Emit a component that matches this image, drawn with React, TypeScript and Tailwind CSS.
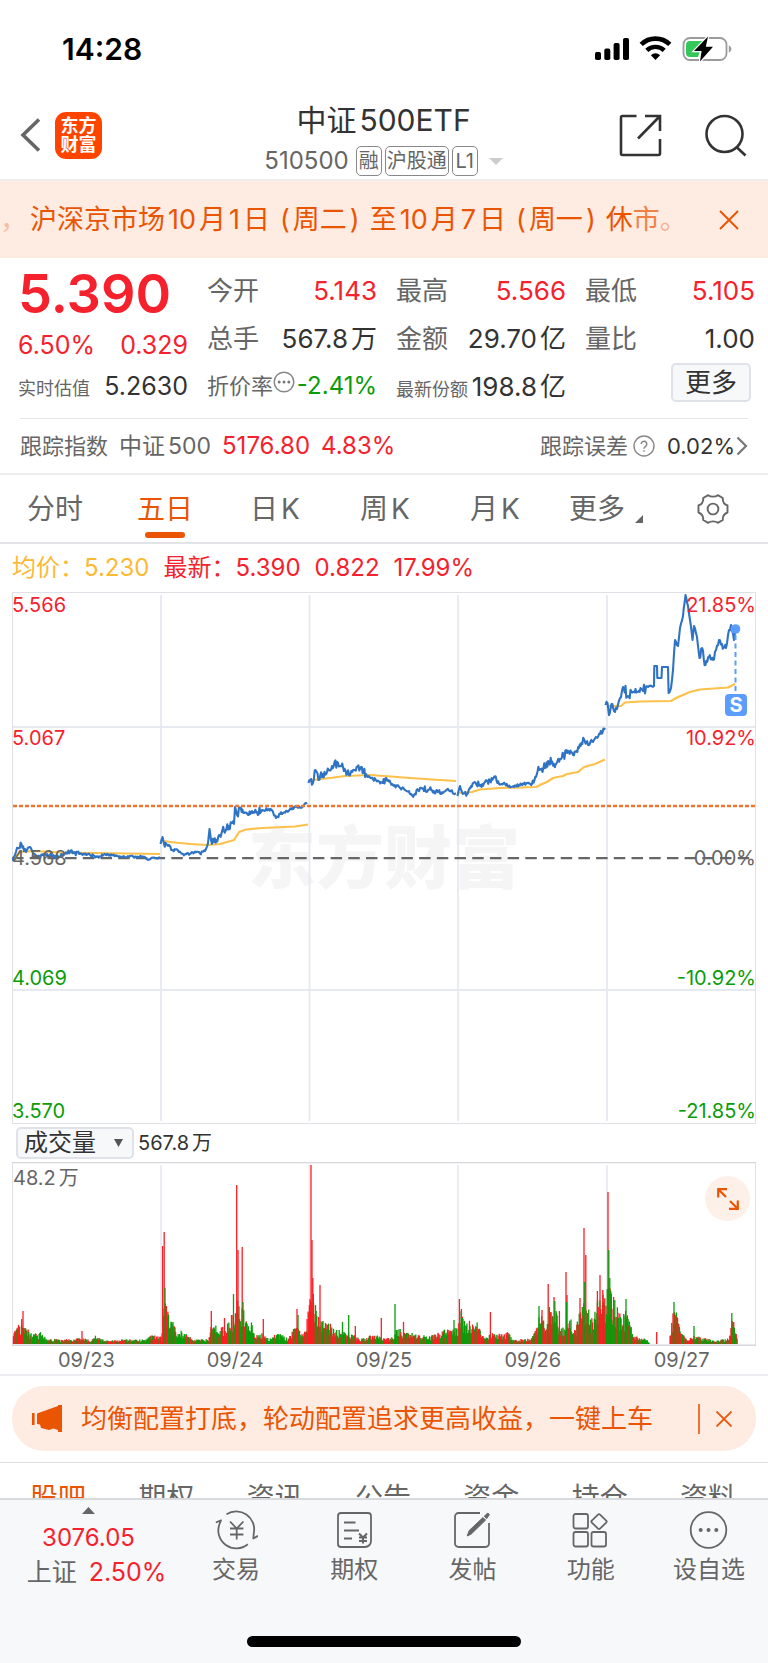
import React from "react";

type Key = [number, number, number?];

const RED = "#fb1e24";
const GREEN = "#0a9c0a";

function makeRandom(seed: number) {
  let s = seed;
  return () => {
    s = (s * 1664525 + 1013904223) % 4294967296;
    return s / 4294967296;
  };
}

/* Price keys: x, y and the jitter of the minute ticks after that key */
const priceDays: Key[][] = [
  [
    [12.5, 861, 1], [15, 855, 2], [18, 848, 2], [21.5, 844, 2], [24, 851, 2], [27, 850, 2], [30, 847, 2], [33, 853, 1],
    [38, 857, 1], [47, 854, 1.2], [54, 857, 1.2], [62, 855, 1.5], [70, 852, 1.5], [80, 854, 1], [90, 855, 1], [97, 857, 0.8],
    [107, 854, 0.8], [116, 856, 0.6], [127, 857, 0.8], [143, 856.5, 0.8], [148, 860, 0.8], [153, 857.5, 0.8], [160, 858],
  ],
  [
    [160.5, 844, 1], [162.5, 837, 1], [164, 844, 2], [168, 846, 1.6], [172, 850, 0.8], [178, 850.5, 0.8], [183, 854, 1],
    [190, 854, 0.8], [195, 851.5, 0.8], [200, 853.5, 1], [205, 851, 1], [208, 843, 1], [209.5, 829, 1], [211, 840, 2.5],
    [214, 842, 3.5], [219, 835, 3.5], [224, 831, 3], [229, 826, 3], [234, 824, 1], [235, 807, 2], [237, 815, 3], [240, 808, 1.5],
    [244, 813, 1.5], [248, 815, 1.5], [252, 811, 1.5], [257, 812, 3], [262, 810, 1], [269, 809, 1], [273, 812, 1], [276, 818, 2],
    [280, 814, 1], [287, 811, 1], [296, 807, 1.3], [302, 807.5, 1], [307, 802.5],
  ],
  [
    [308.5, 783, 2], [311, 779, 3], [313, 783, 3], [315.5, 770, 3], [318.5, 780, 4], [322, 777, 2], [327, 772, 2.5], [332, 766, 3],
    [338, 763, 2], [343, 767, 2.5], [349, 775, 2], [354, 770, 2], [361, 767, 3], [366, 774, 1.5], [373, 779, 1.5], [381, 782, 2],
    [388, 780, 1], [394, 786, 1.2], [402, 788, 1.2], [409, 791, 2], [414, 795, 1.5], [420, 788, 2.5], [428, 790, 2.2],
    [436, 791, 2], [441, 794, 1.2], [447, 789.5, 1], [456, 793.5],
  ],
  [
    [457.5, 796, 1], [460, 786, 1], [462, 792, 1.5], [467, 794, 1.5], [471, 786, 1.5], [475, 782, 2], [479, 785, 3], [484, 783, 2],
    [490, 781, 1.5], [494, 777, 2], [499, 784, 1.2], [505, 784, 1], [511, 787, 1], [519, 785, 1], [527, 783, 1], [532, 784, 1.5],
    [536, 777, 4], [540, 769, 5], [545, 768, 4], [549, 762, 4], [554, 764, 3], [560, 759, 4], [567, 753, 3.5], [573, 755, 1.5],
    [579, 748, 2], [584, 739, 2], [588, 745, 2], [594, 740, 1], [600, 734, 1.5], [605, 728],
  ],
  [
    [605.5, 705, 3], [607.5, 703, 3], [609, 715, 2], [611.5, 704, 2], [614, 711, 2], [617, 709, 2], [620, 698, 3], [623, 687, 4],
    [628, 696, 3], [633, 692, 2.2], [638, 692, 2.5], [643, 691, 4], [646, 687, 0.6], [654, 686, 0], [654.3, 666, 0], [657, 666, 0],
    [657.3, 678, 0], [661.5, 678, 0], [662, 667, 0], [668, 667, 0], [668.6, 693, 1], [671, 688, 2], [673, 670, 1], [675, 640, 0.8],
    [678, 646, 1], [680, 628, 1], [683, 616, 1], [685.5, 595, 0.5], [688, 606, 1], [690.5, 623, 2], [692.5, 640, 1], [694, 626, 1.5],
    [696, 633, 2], [698, 646, 1], [699.5, 658, 2], [702, 648, 3], [705.5, 665, 2], [709, 657, 3], [713, 660, 2], [716, 650, 2],
    [719, 640, 2], [722, 644, 3], [726, 648, 3], [729, 630, 2], [731, 625, 1], [734, 640, 1], [735.5, 629],
  ],
];

const averageDays: string[] = [
  "13,861 20,852 34,851 60,852.5 95,853 160,854",
  "163,841 175,842.5 190,844 207,845 220,844 234,840 239,832 246,829.5 262,828 295,826.5 308,824.5",
  "312,780 330,778 345,776 370,775 391,776.5 410,778 440,780 456,781",
  "459,793 472,792 480,789.5 500,788 536,787 541,784.5 547,782 553,778 563,776 567,774 578,772 584,767 595,764 605,759.5",
  "609,706 621,706 625,702.5 640,701.5 671,701 677,697.5 690,692 700,689.5 728,687.5 735,684",
];

function tickPath(keys: Key[], seed: number) {
  const random = makeRandom(seed);
  const out: string[] = [];
  for (let i = 0; i < keys.length - 1; i++) {
    const [x0, y0, jitter = 0] = keys[i];
    const [x1, y1] = keys[i + 1];
    out.push(`${x0},${y0}`);
    const steps = Math.floor((x1 - x0) / 0.8);
    for (let k = 1; k < steps; k++) {
      const t = k / steps;
      const y = y0 + (y1 - y0) * t + (random() - 0.5) * 2.9 * jitter;
      out.push(`${(x0 + (x1 - x0) * t).toFixed(1)},${y.toFixed(1)}`);
    }
  }
  const last = keys[keys.length - 1];
  out.push(`${last[0]},${last[1]}`);
  return out.join(" ");
}

/* Volume envelope: x, typical height, share of rising minutes */
const volumeEnvelope: [number, number, number][] = [
  [13, 12, 0.3], [20, 18, 0.8], [24, 18, 0.4], [30, 9, 0.3], [40, 10, 0.3], [48, 4, 0.4], [85, 5, 0.4], [90, 3, 0.5],
  [95, 7, 0.3], [105, 3, 0.7], [125, 4, 0.4], [143, 4, 0.4], [150, 8, 0.7], [161, 6, 0.5], [163, 40, 0.8], [168, 28, 0.3],
  [172, 16, 0.2], [186, 9, 0.5], [192, 4, 0.2], [208, 4, 0.7], [211, 20, 0.3], [216, 15, 0.4], [224, 16, 0.6], [230, 20, 0.5],
  [236, 40, 0.6], [242, 34, 0.5], [246, 18, 0.1], [251, 19, 0.1], [254, 7, 0.4], [262, 10, 0.5], [266, 5, 0.2], [278, 9, 0.1],
  [288, 5, 0.6], [296, 18, 0.8], [301, 8, 0.5], [307, 24, 0.9], [311, 50, 0.9], [315, 36, 0.5], [320, 20, 0.5], [330, 17, 0.5],
  [340, 12, 0.5], [352, 8, 0.4], [362, 5, 0.4], [370, 8, 0.2], [382, 7, 0.6], [392, 6, 0.3], [396, 14, 0.3], [406, 11, 0.5],
  [416, 8, 0.4], [430, 7, 0.5], [444, 12, 0.4], [457, 14, 0.3], [460, 32, 0.7], [464, 20, 0.4], [476, 20, 0.7], [482, 7, 0.5],
  [492, 9, 0.6], [508, 10, 0.2], [513, 4, 0.5], [531, 5, 0.4], [536, 14, 0.5], [540, 30, 0.4], [545, 17, 0.5], [550, 28, 0.5],
  [556, 28, 0.4], [560, 12, 0.5], [568, 24, 0.4], [575, 14, 0.6], [582, 36, 0.7], [587, 32, 0.4], [592, 20, 0.3], [597, 38, 0.6],
  [603, 42, 0.5], [609, 52, 0.4], [615, 34, 0.4], [622, 24, 0.5], [627, 30, 0.2], [632, 9, 0.3], [640, 6, 0.3], [648, 3, 0.3],
  [649, 0, 0], [669, 0, 0], [670, 12, 0.5], [674, 36, 0.6], [680, 10, 0.5], [688, 5, 0.5], [695, 7, 0.3], [705, 5, 0.3],
  [716, 3, 0.4], [728, 5, 0.6], [732, 22, 0.5], [736, 12, 0.3], [737, 0, 0],
];

const volumeSpikes: [number, number, string][] = [
  [23, 33, RED], [21.7, 25, RED], [18.5, 19, RED], [82, 13, RED], [162.6, 98, RED], [164.2, 112, RED], [165, 56, GREEN],
  [166.4, 38, RED], [173, 22, GREEN], [211.3, 33, RED], [224.5, 26, RED], [231.5, 29, RED], [233.5, 50, GREEN],
  [236.7, 159, RED], [238, 94, RED], [242.2, 97, RED], [243, 42, GREEN], [263.3, 25, RED], [297, 35, RED], [298, 29, GREEN],
  [311, 179, RED], [312, 104, RED], [312.8, 66, RED], [313.6, 41, GREEN], [320, 59, RED], [348.7, 29, GREEN], [342.5, 22, GREEN],
  [355.3, 18, RED], [381.3, 26, RED], [395, 40, GREEN], [403.5, 22, RED], [454, 24, GREEN], [459.4, 45, RED], [461.4, 35, RED],
  [462.4, 26, GREEN], [490.4, 32, RED], [539, 38, GREEN], [542, 34, RED], [548.2, 60, RED], [549.4, 37, GREEN], [554, 47, RED],
  [554.8, 43, GREEN], [559.4, 33, RED], [566, 72, RED], [567, 49, RED], [566.6, 42, GREEN], [580, 46, RED], [584, 116, RED],
  [585.8, 89, RED], [584.8, 62, GREEN], [597.4, 53, RED], [600, 69, RED], [602.8, 54, RED], [608, 152, RED], [608.8, 94, GREEN],
  [609.8, 66, GREEN], [610.8, 53, GREEN], [613.6, 47, RED], [614.8, 44, GREEN], [626, 45, GREEN], [656.7, 12, RED],
  [674, 42, GREEN], [675.2, 29, RED], [694, 18, GREEN], [731.8, 31, GREEN],
];

function buildVolume() {
  const random = makeRandom(77);
  const bars: [number, number, string][] = [];
  for (let i = 0; i < volumeEnvelope.length - 1; i++) {
    const [x0, h0, share] = volumeEnvelope[i];
    const [x1, h1] = volumeEnvelope[i + 1];
    for (let x = x0; x < x1; x += 0.62) {
      const h = h0 + ((h1 - h0) * (x - x0)) / (x1 - x0);
      if (h < 0.5) continue;
      bars.push([x + 0.5, h * (0.45 + random() * 0.75), random() < share ? RED : GREEN]);
    }
  }
  return bars;
}

const volumeBars = [...buildVolume(), ...volumeSpikes];

function StatusBar() {
  return (
    <div className="flex h-[98px] items-center justify-between pr-9 pl-[62px]">
      <span className="text-[30px] leading-none font-semibold text-black">14:28</span>
      <svg className="h-[26px] w-[138px]" viewBox="594 36 138 26" fill="none" aria-hidden="true">
        <g fill="#000">
          <rect x="595" y="52" width="6" height="8" rx="1.8" />
          <rect x="604.3" y="48.6" width="6" height="11.4" rx="1.8" />
          <rect x="613.6" y="43" width="6" height="17" rx="1.8" />
          <rect x="623" y="38" width="6" height="22" rx="1.8" />
        </g>
        <path d="M641.2 44.4a20.5 20.5 0 0 1 28.6 0" stroke="#000" strokeWidth="4.6" />
        <path d="M646.8 50.4a12.6 12.6 0 0 1 17.4 0" stroke="#000" strokeWidth="4.4" />
        <path d="M650.9 55.2a6.6 6.6 0 0 1 9.2 0L655.5 60z" fill="#000" />
        <rect x="683.5" y="38" width="43" height="22" rx="6.5" stroke="#9b9b9b" strokeWidth="1.8" />
        <path d="M728.8 45.500v7c3.400-1.200 3.400-5.800 0-7z" fill="#9b9b9b" />
        <path d="M690 41h13l-8 10h5l-2 6h-8a4 4 0 0 1-4-4v-8a4 4 0 0 1 4-4z" fill="#34c759" />
        <path d="M708 36.500l-14 14.600h7.600l-1.600 10.500L713 46.700h-7.200z" fill="#000" stroke="#fff" strokeWidth="2.400" paintOrder="stroke" />
      </svg>
    </div>
  );
}

/* Chinese and Latin runs side by side, with a narrow gap between them */
function Mix({ parts }: { parts: string[] }) {
  return (
    <span className="inline-flex items-baseline gap-[3px] whitespace-nowrap">
      {parts.map((part, i) => (
        <span key={i}>{part}</span>
      ))}
    </span>
  );
}

function Tag({ children }: { children: React.ReactNode }) {
  return (
    <span className="flex h-[30px] min-w-[26px] items-center justify-center rounded-[5px] border-[1.5px] border-[#888] px-px text-[20px] leading-none text-[#666]">
      {children}
    </span>
  );
}

function Header() {
  return (
    <header className="flex h-[83px] items-start justify-between border-b-2 border-[#ededee] pr-[21px] pl-5">
      <div className="flex flex-1 items-center gap-3 pt-[13px]">
        <button aria-label="返回" className="flex h-12 w-[23px] items-center">
          <svg className="h-9 w-[22px]" viewBox="0 0 22 36" fill="none" stroke="#666" strokeWidth="3.600">
            <path d="M19 2.500L3 18l16 15.500" />
          </svg>
        </button>
        <a href="#home" className="flex size-[47px] flex-col items-center justify-center rounded-[11px] bg-[#ff4400] text-[18px] leading-[19px] font-bold text-white">
          <span>东方</span>
          <span>财富</span>
        </a>
      </div>
      <div className="flex flex-col items-center gap-[10px] pt-[6px]">
        <h1 className="text-[30px] leading-[32px] text-[#333]">
          <Mix parts={["中证", "500ETF"]} />
        </h1>
        <button className="flex items-center gap-[3px]" aria-label="510500 切换品种">
          <span className="pr-1 text-[24px] leading-[30px] text-[#666]">510500</span>
          <Tag>融</Tag>
          <Tag>沪股通</Tag>
          <Tag>L1</Tag>
          <svg className="ml-2 h-[7px] w-[14px]" viewBox="0 0 14 7" fill="#ccc">
            <path d="M0 0h14L7 7z" />
          </svg>
        </button>
      </div>
      <div className="flex flex-1 items-center justify-end gap-[42px] pt-4">
        <button aria-label="分享">
          <svg className="size-[43px]" viewBox="0 0 43 43" fill="none" stroke="#333" strokeWidth="2.600">
            <path d="M17.500 2H3.500A1.500 1.500 0 0 0 2 3.500v36A1.500 1.500 0 0 0 3.500 41h36a1.500 1.500 0 0 0 1.500-1.500V25" />
            <path d="M26 2h15v15M40.500 2.500L19 24.500" />
          </svg>
        </button>
        <button aria-label="搜索">
          <svg className="size-[43px]" viewBox="0 0 43 43" fill="none" stroke="#333" strokeWidth="2.600">
            <circle cx="20.500" cy="20" r="18" />
            <path d="M32.500 33l9 8.500" />
          </svg>
        </button>
      </div>
    </header>
  );
}

function Notice() {
  return (
    <div className="flex h-[77px] items-center justify-between bg-[#feece3] pr-[29px] text-[#ea5504]">
      <p className="flex items-center gap-[10px] text-[27px] leading-none whitespace-nowrap">
        <span className="-mr-[10px] w-[30px] opacity-30">，</span>
        <Mix parts={["沪深京市场", "10", "月", "1", "日"]} />
        <Mix parts={["(", "周二", ")"]} />
        <Mix parts={["至", "10", "月", "7", "日"]} />
        <Mix parts={["(", "周一", ")"]} />
        <span>
          休<span className="opacity-70">市</span>
          <span className="opacity-40">。</span>
        </span>
      </p>
      <button aria-label="关闭公告">
        <svg className="size-5" viewBox="0 0 20 20" fill="none" stroke="#ea5504" strokeWidth="2">
          <path d="M1 1l18 18M19 1L1 19" />
        </svg>
      </button>
    </div>
  );
}

type Quote = { label: string; value: string[]; tone: string; small?: boolean; info?: boolean };

const quotes: Quote[] = [
  { label: "今开", value: ["5.143"], tone: "text-[#f5222d]" },
  { label: "最高", value: ["5.566"], tone: "text-[#f5222d]" },
  { label: "最低", value: ["5.105"], tone: "text-[#f5222d]" },
  { label: "总手", value: ["567.8", "万"], tone: "text-[#333]" },
  { label: "金额", value: ["29.70", "亿"], tone: "text-[#333]" },
  { label: "量比", value: ["1.00"], tone: "text-[#333]" },
  { label: "折价率", value: ["-2.41%"], tone: "text-[#0a9c0a]", info: true },
  { label: "最新份额", value: ["198.8", "亿"], tone: "text-[#333]", small: true },
];

function labelSize(q: Quote) {
  if (q.small) return "text-[18px]";
  return q.info ? "text-[22px]" : "text-[26px]";
}

function QuotePanel() {
  return (
    <section className="grid h-40 grid-cols-4 gap-x-[19px] pr-[13px] pl-[18px]">
      <div className="flex flex-col pt-1 whitespace-nowrap">
        <strong className="flex h-16 items-center text-[54px] leading-none font-semibold text-[#f5222d]">5.390</strong>
        <div className="flex h-[38px] items-center justify-between text-[25px] leading-none text-[#f5222d]">
          <span>6.50%</span>
          <span>0.329</span>
        </div>
        <div className="flex h-[44px] items-baseline justify-between pt-[10px] leading-none">
          <span className="text-[18px] text-[#666]">实时估值</span>
          <span className="text-[25px] text-[#333]">5.2630</span>
        </div>
      </div>
      <dl className="col-span-3 grid grid-cols-3 grid-rows-[48px_48px_48px] gap-x-[19px] pt-[9px]">
        {quotes.map((q) => (
          <div key={q.label} className="flex items-baseline justify-between pt-[11px] leading-none whitespace-nowrap">
            <dt className={`flex text-[#666] ${labelSize(q)}`}>
              {q.label}
              {q.info && (
                <svg className="-mt-1 size-[22px]" viewBox="0 0 22 22" fill="none">
                  <circle cx="11" cy="11" r="9.800" stroke="#888" strokeWidth="1.500" />
                  <g fill="#777">
                    <circle cx="6.200" cy="11" r="1.500" />
                    <circle cx="11" cy="11" r="1.500" />
                    <circle cx="15.800" cy="11" r="1.500" />
                  </g>
                </svg>
              )}
            </dt>
            <dd className={`${q.info ? "text-[24px]" : "text-[26px]"} ${q.tone}`}>
              <Mix parts={q.value} />
            </dd>
          </div>
        ))}
        <div className="flex items-start justify-end pr-1">
          <button className="h-[39px] w-[80px] rounded-[5px] border-2 border-[#dfe2e8] bg-[#f7f8fa] text-[26px] leading-none text-[#333]">
            更多
          </button>
        </div>
      </dl>
    </section>
  );
}

function TrackingRow() {
  return (
    <section className="border-b-2 border-[#ededee]">
      <div className="mx-5 flex h-[55px] items-center justify-between border-t border-[#e6e6e8] text-[22px] leading-none whitespace-nowrap">
        <div className="flex items-center gap-[11px]">
          <span className="text-[#666]">跟踪指数</span>
          <span className="text-[23px] text-[#666]">
            <Mix parts={["中证", "500"]} />
          </span>
          <span className="text-[24px] text-[#f5222d]">5176.80</span>
          <span className="text-[24px] text-[#f5222d]">4.83%</span>
        </div>
        <a href="#tracking" className="flex items-center">
          <span className="text-[#666]">跟踪误差</span>
          <svg className="mr-3 ml-[5px] size-[22px]" viewBox="0 0 22 22" fill="none" stroke="#888">
            <circle cx="11" cy="11" r="10" strokeWidth="1.400" />
            <path d="M8.200 9a2.800 2.800 0 1 1 4.400 2.300c-1.100.800-1.600 1.200-1.600 2.500M11 15.200v1.600" strokeWidth="1.500" />
          </svg>
          <span className="text-[#333]">0.02%</span>
          <svg className="ml-px h-5 w-3" viewBox="0 0 12 20" fill="none" stroke="#777" strokeWidth="2.200">
            <path d="M1.500 1.500L10 10l-8.500 8.500" />
          </svg>
        </a>
      </div>
    </section>
  );
}

const periods = [["分时"], ["五日"], ["日", "K"], ["周", "K"], ["月", "K"]];

function PeriodTabs() {
  return (
    <nav className="flex h-[69px] border-b-2 border-[#e3e4e8] pr-2 text-[28px] leading-none text-[#666]">
      {periods.map((p) => {
        const active = p[0] === "五日";
        return (
          <button
            key={p[0]}
            aria-pressed={active}
            className={`relative flex w-[110px] items-center justify-center whitespace-nowrap ${active ? "text-[#ea5504]" : ""}`}
          >
            <Mix parts={p} />
            {active && <span className="absolute bottom-1 h-[6px] w-10 rounded-full bg-[#ea5504]" />}
          </button>
        );
      })}
      <button className="flex flex-1 items-center justify-center gap-[10px] pr-1">
        更多
        <svg className="mt-5 size-2" viewBox="0 0 8 8" fill="#666">
          <path d="M8 0v8H0z" />
        </svg>
      </button>
      <button aria-label="设置" className="flex w-[94px] items-center justify-center">
        <svg className="h-8 w-8" viewBox="0 0 32 32" fill="none" stroke="#666" strokeWidth="1.900">
          <path d="M11.200 2.200c2.400 1.900 7.200 1.900 9.600 0l5 2.800c-.300 3.200 1.600 6.300 4.700 7.500v7c-3.100 1.200-5 4.300-4.700 7.500l-5 2.800c-2.400-1.900-7.200-1.900-9.600 0l-5-2.800c.300-3.200-1.600-6.300-4.700-7.500v-7c3.100-1.200 5-4.300 4.700-7.500z" strokeLinejoin="round" />
          <circle cx="16" cy="16" r="5.400" />
        </svg>
      </button>
    </nav>
  );
}

const highLabels = [
  { price: "5.566", change: "21.85%", tone: "text-[#f5222d]" },
  { price: "5.067", change: "10.92%", tone: "text-[#f5222d]" },
];

const lowLabels = [
  { price: "4.069", change: "-10.92%", tone: "text-[#0a9c0a]" },
  { price: "3.570", change: "-21.85%", tone: "text-[#0a9c0a]" },
];

function ScaleRow({ price, change, tone }: { price: string; change: string; tone: string }) {
  return (
    <div className={`flex justify-between ${tone}`}>
      <span>{price}</span>
      <span>{change}</span>
    </div>
  );
}

function PriceChart() {
  return (
    <section aria-label="五日走势">
      <div className="flex h-12 items-center gap-[14px] px-3 text-[24px] leading-none whitespace-nowrap">
        <span className="text-[#fdb933]">均价：5.230</span>
        <span className="text-[#f5222d]">最新：5.390</span>
        <span className="text-[#f5222d]">0.822</span>
        <span className="text-[#f5222d]">17.99%</span>
      </div>
      <div className="relative mx-3 h-[532px]">
        <div className="absolute inset-0 flex items-center justify-center text-[68px] leading-none font-black text-[#f5f5f6]">东方财富</div>
        <svg className="absolute inset-0 h-full w-full" viewBox="12 592 744 532" preserveAspectRatio="none" fill="none">
          <rect x="12.500" y="592.500" width="743" height="531" stroke="#dfe1e7" />
          <path d="M161 595v526M309.500 595v526M458 595v526M607 595v526M13 727h742M13 990h742" stroke="#e6e9f0" strokeWidth="1.800" />
          <path d="M12 858.200h743" stroke="#666" strokeWidth="2.200" strokeDasharray="11.500 6.200" />
          {averageDays.map((points) => (
            <polyline key={points} points={points} stroke="#fdc04a" strokeWidth="2.200" strokeLinejoin="round" />
          ))}
          {priceDays.map((keys, i) => (
            <polyline key={i} points={tickPath(keys, 11 + i * 7)} stroke="#2f73c4" strokeWidth="2.100" strokeLinejoin="round" />
          ))}
          <path d="M13 806h742" stroke="#f0762f" strokeWidth="2.600" strokeDasharray="4 2" />
          <path d="M735.500 635v58" stroke="#5b9dff" strokeWidth="2" strokeDasharray="5 3.500" />
          <circle cx="735.500" cy="629" r="4.800" fill="#5b9dff" />
        </svg>
        <div className="absolute inset-0 flex flex-col text-[20px] leading-[26px]">
          {highLabels.map((row) => (
            <div key={row.price} className="h-1/4">
              <ScaleRow {...row} />
            </div>
          ))}
          <div className="flex h-0 flex-col justify-center">
            <ScaleRow price="4.568" change="0.00%" tone="text-[#666]" />
          </div>
          {lowLabels.map((row) => (
            <div key={row.price} className="flex h-1/4 flex-col justify-end">
              <ScaleRow {...row} />
            </div>
          ))}
        </div>
        <span className="absolute top-[102px] right-[9px] flex size-[22px] items-center justify-center rounded-[4px] bg-[#5b9dff] text-[20px] leading-none font-bold text-white">
          S
        </span>
      </div>
    </section>
  );
}

const dates = ["09/23", "09/24", "09/25", "09/26", "09/27"];

function VolumeChart() {
  return (
    <section aria-label="成交量" className="border-b-2 border-[#ededf1]">
      <div className="flex h-[38px] items-center gap-1 px-4 text-[20px] leading-none text-[#333]">
        <button className="flex h-8 w-[118px] items-center justify-between rounded-[5px] border-2 border-[#dfe2e8] bg-[#f7f8fa] pr-[9px] pl-[6px] text-[24px] leading-none">
          成交量
          <svg className="h-2 w-[9px]" viewBox="0 0 9 8" fill="#555">
            <path d="M0 0h9L4.500 8z" />
          </svg>
        </button>
        <Mix parts={["567.8", "万"]} />
      </div>
      <div className="relative mx-3 h-[184px]">
        <svg className="absolute inset-0 h-full w-full" viewBox="12 1162 744 184" preserveAspectRatio="none" fill="none">
          <path d="M12.500 1162v183M755.500 1162v183" stroke="#dfe1e7" />
          <path d="M12 1162.500h744M12 1345.200h744" stroke="#d5d7dd" strokeWidth="1.400" />
          <path d="M161 1165v179M309.500 1165v179M458 1165v179M607 1165v179" stroke="#e6e9f0" strokeWidth="1.600" />
          {volumeBars.map(([x, h, color], i) => (
            <path key={i} d={`M${x.toFixed(2)} 1344v${(-h).toFixed(1)}`} stroke={color} strokeWidth="1.300" />
          ))}
        </svg>
        <span className="absolute top-1 left-px text-[20px] leading-[24px] text-[#666]">
          <Mix parts={["48.2", "万"]} />
        </span>
        <button aria-label="全屏" className="absolute top-[14px] right-[6px] flex size-[45px] items-center justify-center rounded-full bg-[#fdf0e9]">
          <svg className="size-[22px]" viewBox="0 0 22 22" fill="none" stroke="#ea5504" strokeWidth="2.200">
            <path d="M1.200 9.500V1.200H10M1.500 1.500L9 9M20.800 12.500v8.300H12M20.500 20.500L13 13" />
          </svg>
        </button>
      </div>
      <div className="mx-3 grid h-7 grid-cols-5 text-center text-[20px] leading-[28px] text-[#666]">
        {dates.map((d) => (
          <span key={d}>{d}</span>
        ))}
      </div>
    </section>
  );
}

function Promo() {
  return (
    <div className="border-b border-[#dedfe3] px-3 pt-[10px] pb-[11px]">
      <div className="flex h-[65px] items-center rounded-[32px] bg-[#feece3] pr-6 pl-5 text-[#ea5504]">
        <svg className="h-[27px] w-[31px]" viewBox="0 0 31 27" fill="#ea5504" aria-hidden="true">
          <path d="M0 8h2.600v12H0zM5 8.500L26 1V0h4v27h-4v-2l-4.500-1.500L17 25l-8-2-1-3.500L5 19z" />
        </svg>
        <a href="#promo" className="ml-[18px] flex-1 text-[26px] leading-none whitespace-nowrap">
          均衡配置打底，轮动配置追求更高收益，一键上车
        </a>
        <span className="mr-4 h-[30px] w-[2px] bg-[#ea5504]/80" />
        <button aria-label="关闭推广">
          <svg className="size-4" viewBox="0 0 16 16" fill="none" stroke="#ea5504" strokeWidth="1.800">
            <path d="M.500.500l15 15M15.500.500l-15 15" />
          </svg>
        </button>
      </div>
    </div>
  );
}

const sections = ["股吧", "期权", "资讯", "公告", "资金", "持仓", "资料"];

function SectionTabs() {
  return (
    <nav className="flex h-[35px] items-start justify-between overflow-hidden pt-5 pr-8 pl-[30px] text-[28px] leading-[30px] text-[#666]">
      {sections.map((s) => (
        <button key={s} className={s === "股吧" ? "text-[#ea5504]" : ""}>
          {s}
        </button>
      ))}
    </nav>
  );
}

const icons: Record<string, React.ReactNode> = {
  交易: (
    <>
      <path d="M11.500 4.200A18 18 0 0 1 38.800 23l-.500 5.500 4.600-2.600M32.800 34.300A18 18 0 0 1 4.500 14l1.500-3.600L.800 12.500" />
      <path d="M15 11.500l6.700 7 6.700-7M21.700 18.500v11M15 18.500h13.400M15 24.500h13.400" />
    </>
  ),
  期权: (
    <>
      <path d="M8 3h27a3 3 0 0 1 3 3v25a6 6 0 0 1-6 6H8a3 3 0 0 1-3-3V6a3 3 0 0 1 3-3z" />
      <path d="M11 12.500h11.500M11 20.500h15M11 28.500h8M26 23.500l4 4 4-4M30 27.500v6M26 27.500h8M26 31h8" strokeWidth="2" />
    </>
  ),
  发帖: (
    <>
      <path d="M29 3H7.500A3.500 3.500 0 0 0 4 6.500v27A3.500 3.500 0 0 0 7.500 37h27a3.500 3.500 0 0 0 3.500-3.500V13" />
      <path d="M16.200 26l2-5.500L32 7.500l2.600 2.600L20 24.200zM33.300 6.200L36.800 3l1.600 1.600-2.700 4z" fill="#666" strokeWidth="1" />
    </>
  ),
  功能: (
    <>
      <rect x="4.500" y="4" width="14.500" height="14.500" rx="2" />
      <rect x="4.500" y="22" width="14.500" height="14.500" rx="2" />
      <rect x="22.500" y="22" width="14.500" height="14.500" rx="2" />
      <path d="M29 4.600q1-1 2 0l6.200 6q1 1 0 2l-6.200 6q-1 1-2 0l-6.200-6q-1-1 0-2z" />
    </>
  ),
  设自选: (
    <>
      <circle cx="21.500" cy="20" r="17.800" />
      <g fill="#666" stroke="none">
        <circle cx="13.700" cy="20" r="2" />
        <circle cx="21.500" cy="20" r="2" />
        <circle cx="29.300" cy="20" r="2" />
      </g>
    </>
  ),
};

function BottomBar() {
  return (
    <footer className="flex h-[165px] flex-col justify-between border-t-2 border-[#d9dade] bg-[#f7f8fa]">
      <div className="flex pt-[7px]">
        <a href="#index" className="flex w-[177px] flex-col items-center leading-none whitespace-nowrap text-[#f5222d]">
          <svg className="h-[7px] w-[13px]" viewBox="0 0 13 7" fill="#666">
            <path d="M6.500 0L13 7H0z" />
          </svg>
          <span className="mt-[9px] text-[24px] leading-[30px]">3076.05</span>
          <span className="mt-[3px] flex items-center gap-3 pl-4 text-[25px] leading-[32px]">
            <span className="text-[#666]">上证</span>
            <span>2.50%</span>
          </span>
        </a>
        <div className="grid flex-1 grid-cols-5">
          {Object.keys(icons).map((name) => (
            <button key={name} className="flex flex-col items-center gap-[3px] pt-[3px] text-[24px] leading-[34px] whitespace-nowrap text-[#666]">
              <svg className="h-10 w-[43px]" viewBox="0 0 43 40" fill="none" stroke="#666" strokeWidth="1.800" strokeLinejoin="round">
                {icons[name]}
              </svg>
              {name}
            </button>
          ))}
        </div>
      </div>
      <div className="mx-auto mb-4 h-[11px] w-[274px] rounded-full bg-black" />
    </footer>
  );
}

export default function App() {
  return (
    <div className="flex min-h-screen flex-col bg-white font-['Inter','Noto_Sans_CJK_SC',sans-serif]">
      <StatusBar />
      <Header />
      <Notice />
      <main className="flex-1">
        <QuotePanel />
        <TrackingRow />
        <PeriodTabs />
        <PriceChart />
        <VolumeChart />
        <Promo />
        <SectionTabs />
      </main>
      <BottomBar />
    </div>
  );
}
